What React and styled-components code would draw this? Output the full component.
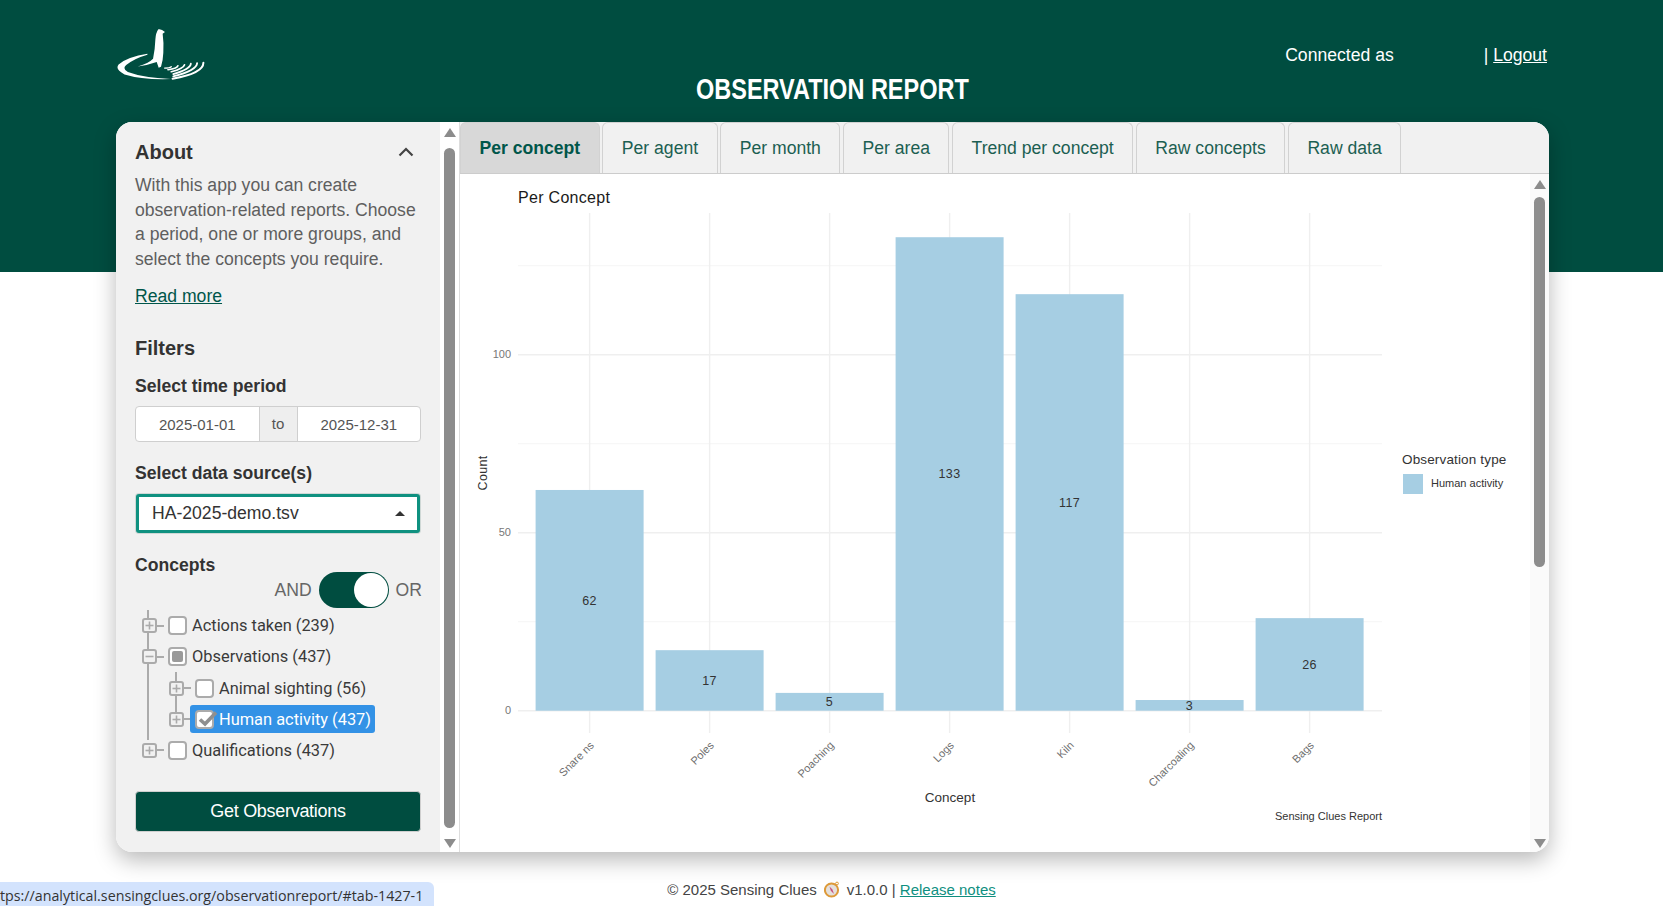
import styled, { createGlobalStyle } from "styled-components";

const GREEN = "#004d40";
const GREY = "#8c8c8c";
const TREE_LINE = "#ababab";

const GlobalStyle = createGlobalStyle`
  html, body {
    margin: 0;
    height: 100%;
    overflow: hidden;
    background: #ffffff;
    font-family: "Liberation Sans", Arial, sans-serif;
    color: #333333;
  }
`;

const Hero = styled.header`
  height: 272px;
  background: ${GREEN};
  color: #ffffff;
`;

const HeroInner = styled.div`
  width: 1433px;
  margin-left: 116px;
  padding-top: 28px;
  display: grid;
  grid-template-columns: 1fr auto 1fr;
  align-items: start;
`;

const Title = styled.h1`
  margin: 47px 0 0;
  font-size: 29px;
  line-height: 28px;
  font-weight: 700;
  transform: scaleX(0.81);
`;

const Account = styled.div`
  margin-top: 15px;
  display: flex;
  justify-content: flex-end;
  padding-right: 2px;
  font-size: 17.6px;
  line-height: 24px;
  a {
    color: #ffffff;
  }
`;

const UserName = styled.span`
  margin-right: 90px;
`;

const Card = styled.main`
  width: 1433px;
  height: 730px;
  margin: -150px 0 0 116px;
  display: flex;
  background: #ffffff;
  border-radius: 16px;
  overflow: hidden;
  box-shadow: 0 8px 22px rgba(0, 0, 0, 0.28);
  position: relative;
`;

const Sidebar = styled.aside`
  width: 324px;
  box-sizing: border-box;
  padding: 18px 19px 0 19px;
  background: #f1f1f1;
`;

const SectionTitle = styled.h2`
  margin: ${(p) => p.$top || 0}px 0 0;
  font-size: 20px;
  line-height: 24px;
  font-weight: 700;
  color: #333333;
`;

const AboutHead = styled.div`
  display: flex;
  align-items: center;
  justify-content: space-between;
  padding-right: 7px;
`;

const AboutText = styled.p`
  margin: 9px 0 0;
  font-size: 17.6px;
  line-height: 24.64px;
  color: #5f5f5f;
`;

const ReadMore = styled.a`
  display: block;
  margin-top: 12px;
  font-size: 17.6px;
  line-height: 24.64px;
  color: #00564a;
  text-decoration: underline;
`;

const FieldLabel = styled.div`
  margin-top: ${(p) => p.$top}px;
  font-size: 17.6px;
  line-height: 24.64px;
  font-weight: 700;
  color: #333333;
`;

const DateRange = styled.div`
  margin-top: 7px;
  height: 36.5px;
  box-sizing: border-box;
  display: grid;
  grid-template-columns: 1fr 39px 1fr;
  background: #ffffff;
  border: 1px solid #cfcfcf;
  border-radius: 4px;
  font-size: 15px;
  color: #555555;
`;

const DateCell = styled.div`
  display: flex;
  align-items: center;
  justify-content: center;
`;

const DateTo = styled(DateCell)`
  background: #eeeeee;
  border-left: 1px solid #cfcfcf;
  border-right: 1px solid #cfcfcf;
  padding-bottom: 2px;
`;

const Select = styled.div`
  margin: 9px 1px 0;
  height: 39px;
  box-sizing: border-box;
  display: flex;
  align-items: center;
  justify-content: space-between;
  padding: 0 12px 0 13px;
  background: #ffffff;
  border: 3px solid #0f9180;
  border-radius: 3px;
  box-shadow: 0 0 0 1px #cfd8d6;
  font-size: 17.6px;
  color: #333333;
`;

const Caret = styled.span`
  width: 0;
  height: 0;
  border-left: 5px solid transparent;
  border-right: 5px solid transparent;
  border-bottom: 5px solid #333333;
`;

const SwitchRow = styled.div`
  margin: -6px -1px 0 0;
  display: flex;
  align-items: center;
  justify-content: flex-end;
  gap: 7px;
  font-size: 17.6px;
  color: #666666;
`;

const Switch = styled.div`
  width: 70px;
  height: 36px;
  box-sizing: border-box;
  display: flex;
  justify-content: flex-end;
  padding: 1px 1px;
  background: ${GREEN};
  border-radius: 18px;
`;

const Knob = styled.span`
  width: 34px;
  height: 34px;
  border-radius: 50%;
  background: #ffffff;
`;

const Tree = styled.ul`
  list-style: none;
  margin: ${(p) => (p.$nested ? "0" : "2px 0 0")};
  padding: 0 0 0 ${(p) => (p.$nested ? 27 : 7)}px;
  position: relative;
  &::before {
    content: "";
    position: absolute;
    left: ${(p) => (p.$nested ? 33 : 12)}px;
    top: ${(p) => (p.$nested ? -1 : 0)}px;
    bottom: ${(p) => (p.$nested ? 19 : 26)}px;
    width: 2px;
    background: ${TREE_LINE};
  }
`;

const TreeRow = styled.div`
  height: 31.2px;
  display: flex;
  align-items: center;
  position: relative;
`;

const Expander = styled.span`
  width: 15px;
  height: 15px;
  box-sizing: border-box;
  flex: none;
  display: flex;
  align-items: center;
  justify-content: center;
  margin-right: 6px;
  background: #f1f1f1;
  border: 2px solid ${TREE_LINE};
  border-radius: 3px;
  position: relative;
  z-index: 1;
  &::after {
    content: "";
    position: absolute;
    left: 100%;
    top: 4.5px;
    width: 7px;
    height: 2px;
    margin-left: 2px;
    background: ${TREE_LINE};
  }
  svg {
    display: block;
  }
`;

const Anchor = styled.span`
  display: flex;
  align-items: center;
  height: 28px;
  padding: 0 4px 0 5px;
  border-radius: 3px;
  background: ${(p) => (p.$selected ? "#3392e6" : "transparent")};
  color: ${(p) => (p.$selected ? "#ffffff" : "#3a3a3a")};
  font-family: "Roboto", "Noto Sans", sans-serif;
  font-size: 16.4px;
  position: relative;
  z-index: 1;
`;

const CheckBox = styled.span`
  width: 19px;
  height: 19px;
  box-sizing: border-box;
  flex: none;
  margin-right: 5px;
  display: flex;
  align-items: center;
  justify-content: center;
  background: #ffffff;
  border: 2px solid ${TREE_LINE};
  border-radius: 4px;
  position: relative;
`;

const PartialMark = styled.span`
  width: 11px;
  height: 11px;
  border-radius: 2px;
  background: #9a9a9a;
`;

const CheckMark = styled.svg`
  position: absolute;
  left: 0;
  top: -3px;
`;

const SubmitButton = styled.button`
  display: block;
  width: 100%;
  height: 41px;
  margin-top: 25px;
  background: ${GREEN};
  border: 1px solid #cfcfcf;
  border-radius: 4px;
  color: #ffffff;
  font-family: inherit;
  font-size: 18px;
  letter-spacing: -0.3px;
`;

const ScrollTrack = styled.div`
  width: 19px;
  flex: none;
  box-sizing: border-box;
  padding: 6px 0 4px;
  display: flex;
  flex-direction: column;
  align-items: center;
  background: ${(p) => p.$bg};
`;

const ArrowUp = styled.span`
  width: 0;
  height: 0;
  border-left: 6px solid transparent;
  border-right: 6px solid transparent;
  border-bottom: 9px solid ${GREY};
`;

const ArrowDown = styled.span`
  width: 0;
  height: 0;
  margin-top: auto;
  border-left: 6px solid transparent;
  border-right: 6px solid transparent;
  border-top: 9px solid ${GREY};
`;

const Thumb = styled.span`
  width: 11px;
  height: ${(p) => p.$height}px;
  margin-top: ${(p) => p.$top}px;
  border-radius: 6px;
  background: ${GREY};
`;

const Main = styled.section`
  flex: 1;
  min-width: 0;
  display: flex;
  flex-direction: column;
  border-left: 1px solid #dddddd;
`;

const TabBar = styled.nav`
  height: 52px;
  box-sizing: border-box;
  flex: none;
  display: flex;
  gap: 2.6px;
  background: #f1f1f1;
  border-bottom: 1px solid #cccccc;
`;

const Tab = styled.a`
  box-sizing: border-box;
  padding: 0 18.5px;
  display: flex;
  align-items: center;
  background: ${(p) => (p.$active ? "#d8d8d8" : "#f1f1f1")};
  border: 1px solid #d2d2d2;
  border-bottom: 0;
  border-radius: 6px 6px 0 0;
  font-size: 17.6px;
  font-weight: ${(p) => (p.$active ? 700 : 400)};
  color: ${(p) => (p.$active ? "#00564a" : "#1c5f52")};
`;

const ChartArea = styled.div`
  flex: 1;
  min-height: 0;
  display: flex;
`;

const ChartSvg = styled.svg`
  display: block;
  flex: 1;
  min-width: 0;
  font-family: "Liberation Sans", Arial, sans-serif;
`;

const Footer = styled.footer`
  margin-top: 27px;
  display: flex;
  align-items: center;
  justify-content: center;
  gap: 7px;
  font-size: 15px;
  line-height: 21px;
  color: #444444;
  a {
    color: #0f8f7f;
  }
`;

const StatusBubble = styled.div`
  position: fixed;
  left: 0;
  bottom: 0;
  width: 434px;
  height: 24px;
  box-sizing: border-box;
  padding-top: 3px;
  display: flex;
  align-items: center;
  background: #d3e3fd;
  border-top-right-radius: 6px;
  font-family: "Open Sans", "Noto Sans", sans-serif;
  font-size: 14.25px;
  color: #333333;
  white-space: nowrap;
`;

const X0 = 460;
const Y0 = 174;
const ZERO_Y = 710.7 - Y0;
const PER_UNIT = 3.56;
const BAR_W = 108;

const bars = [
  { name: "Snare ns", value: 62 },
  { name: "Poles", value: 17 },
  { name: "Poaching", value: 5 },
  { name: "Logs", value: 133 },
  { name: "Kiln", value: 117 },
  { name: "Charcoaling", value: 3 },
  { name: "Bags", value: 26 },
];

const barX = (i) => 589.6 - X0 + i * 120;
const valY = (v) => ZERO_Y - v * PER_UNIT;

const Chart = () => (
  <ChartSvg width="1070" height="678" viewBox="0 0 1070 678">
    <text x="58" y="29" fontSize="16" letterSpacing="0.3" fill="#1a1a1a">
      Per Concept
    </text>

    {[25, 75, 125].map((v) => (
      <line key={v} x1="58" x2="922" y1={valY(v)} y2={valY(v)} stroke="#f5f5f5" strokeWidth="1" />
    ))}
    {[0, 50, 100].map((v) => (
      <line key={v} x1="58" x2="922" y1={valY(v)} y2={valY(v)} stroke="#efefef" strokeWidth="1.4" />
    ))}
    {bars.map((b, i) => (
      <line key={b.name} x1={barX(i)} x2={barX(i)} y1="39" y2="559" stroke="#efefef" strokeWidth="1.4" />
    ))}

    {[0, 50, 100].map((v) => (
      <text key={v} x="51" y={valY(v) + 3} fontSize="11" textAnchor="end" fill="#777777">
        {v}
      </text>
    ))}

    {bars.map((b, i) => (
      <g key={b.name}>
        <rect x={barX(i) - BAR_W / 2} y={valY(b.value)} width={BAR_W} height={b.value * PER_UNIT} fill="#a6cee3" />
        <text
          x={barX(i)}
          y={valY(b.value / 2) + 4.5}
          fontSize="12.5"
          letterSpacing="0.5"
          textAnchor="middle"
          fill="#333333"
        >
          {b.value}
        </text>
        <text
          x={barX(i) + 5}
          y="572"
          fontSize="11"
          textAnchor="end"
          fill="#6e6e6e"
          transform={`rotate(-45 ${barX(i) + 5} 572)`}
        >
          {b.name}
        </text>
      </g>
    ))}

    <text x="490" y="628" fontSize="13.5" textAnchor="middle" fill="#333333">
      Concept
    </text>
    <text
      x="27"
      y="299"
      fontSize="12.5"
      letterSpacing="0.3"
      textAnchor="middle"
      fill="#333333"
      transform="rotate(-90 27 299)"
    >
      Count
    </text>
    <text x="922" y="646" fontSize="11" textAnchor="end" fill="#333333">
      Sensing Clues Report
    </text>

    <text x="942" y="290" fontSize="13.5" letterSpacing="0.15" fill="#333333">
      Observation type
    </text>
    <rect x="943" y="300" width="20" height="20" fill="#a6cee3" />
    <text x="971" y="313" fontSize="11" fill="#333333">
      Human activity
    </text>
  </ChartSvg>
);

const Logo = () => (
  <svg width="90" height="53" viewBox="20 25 270 160" aria-label="Sensing Clues logo">
    <g fill="#ffffff">
      <path d="M147 29 Q156 27 167 37 L160 42 Q164 70 162 100 Q161 125 155 142 L148 145 L142 128 Q115 138 85 141 Q118 132 131 118 Q137 90 138 60 Q139 40 147 29 Z" />
      <path d="M114 103 Q55 112 27 135 Q15 150 45 165 Q100 182 185 179 Q100 175 55 158 Q37 148 50 137 Q75 117 114 106 Z" />
    </g>
    <g fill="none" stroke="#ffffff" strokeLinecap="round">
      <path d="M283 130 Q283 162 190 178" strokeWidth="6" />
      <path d="M264 131 Q263 153 192 171" strokeWidth="5.5" />
      <path d="M245 133 Q243 149 192 164" strokeWidth="5.5" />
      <path d="M226 136 Q223 148 186 157" strokeWidth="5" />
      <path d="M206 139 Q204 147 176 151" strokeWidth="5" />
      <path d="M186 142 Q181 146 166 146" strokeWidth="4" />
    </g>
  </svg>
);

const Chevron = () => (
  <svg width="16" height="10" viewBox="0 0 16 10" fill="none">
    <path d="M1.5 8.5 L8 2 L14.5 8.5" stroke="#444444" strokeWidth="2.2" />
  </svg>
);

const Compass = () => (
  <svg width="16" height="17" viewBox="0 0 16 17">
    <circle cx="7.5" cy="9" r="6.6" fill="#e4e0dc" stroke="#dd9a3a" strokeWidth="2" />
    <circle cx="13" cy="2.5" r="1.4" fill="none" stroke="#dd9a3a" strokeWidth="1" />
    <path d="M5.5 5.5 L8.4 8.4 L10 13 L6.8 9.8 Z" fill="#c8527c" />
  </svg>
);

const TreeItem = ({ label, open, state, selected }) => (
  <TreeRow>
    <Expander>
      <svg width="9" height="9" viewBox="0 0 9 9">
        <rect x="0.5" y="3.7" width="8" height="1.6" fill={TREE_LINE} />
        {!open && <rect x="3.7" y="0.5" width="1.6" height="8" fill={TREE_LINE} />}
      </svg>
    </Expander>
    <Anchor $selected={selected}>
      <CheckBox>
        {state === "partial" && <PartialMark />}
        {state === "checked" && (
          <CheckMark width="22" height="19" viewBox="0 0 22 19" fill="none">
            <path d="M3 10.5 L8 15 L19 3.5" stroke="#8f8f8f" strokeWidth="3.6" />
          </CheckMark>
        )}
      </CheckBox>
      {label}
    </Anchor>
  </TreeRow>
);

const tabs = ["Per concept", "Per agent", "Per month", "Per area", "Trend per concept", "Raw concepts", "Raw data"];

const App = () => {
  return (
    <>
      <GlobalStyle />
      <Hero>
        <HeroInner>
          <Logo />
          <Title>OBSERVATION REPORT</Title>
          <Account>
            <UserName>Connected as</UserName>
            <span>
              | <a href="#logout">Logout</a>
            </span>
          </Account>
        </HeroInner>
      </Hero>

      <Card>
        <Sidebar>
          <AboutHead>
            <SectionTitle>About</SectionTitle>
            <Chevron />
          </AboutHead>
          <AboutText>
            With this app you can create observation-related reports. Choose a period, one or more groups, and select
            the concepts you require.
          </AboutText>
          <ReadMore href="#more">Read more</ReadMore>

          <SectionTitle $top={28}>Filters</SectionTitle>
          <FieldLabel $top={14}>Select time period</FieldLabel>
          <DateRange>
            <DateCell>2025-01-01</DateCell>
            <DateTo>to</DateTo>
            <DateCell>2025-12-31</DateCell>
          </DateRange>

          <FieldLabel $top={18.5}>Select data source(s)</FieldLabel>
          <Select>
            HA-2025-demo.tsv
            <Caret />
          </Select>

          <FieldLabel $top={20}>Concepts</FieldLabel>
          <SwitchRow>
            AND
            <Switch>
              <Knob />
            </Switch>
            OR
          </SwitchRow>

          <Tree>
            <li>
              <TreeItem label="Actions taken (239)" />
            </li>
            <li>
              <TreeItem label="Observations (437)" open state="partial" />
              <Tree $nested>
                <li>
                  <TreeItem label="Animal sighting (56)" />
                </li>
                <li>
                  <TreeItem label="Human activity (437)" state="checked" selected />
                </li>
              </Tree>
            </li>
            <li>
              <TreeItem label="Qualifications (437)" />
            </li>
          </Tree>

          <SubmitButton>Get Observations</SubmitButton>
        </Sidebar>

        <ScrollTrack $bg="#ffffff">
          <ArrowUp />
          <Thumb $height={680} $top={11} />
          <ArrowDown />
        </ScrollTrack>

        <Main>
          <TabBar>
            {tabs.map((t, i) => (
              <Tab key={t} $active={i === 0}>
                {t}
              </Tab>
            ))}
          </TabBar>
          <ChartArea>
            <Chart />
            <ScrollTrack $bg="#fafafa">
              <ArrowUp />
              <Thumb $height={370} $top={8} />
              <ArrowDown />
            </ScrollTrack>
          </ChartArea>
        </Main>
      </Card>

      <Footer>
        <span>© 2025 Sensing Clues</span>
        <Compass />
        <span>
          v1.0.0 | <a href="#notes">Release notes</a>
        </span>
      </Footer>

      <StatusBubble>tps://analytical.sensingclues.org/observationreport/#tab-1427-1</StatusBubble>
    </>
  );
};

export default App;
